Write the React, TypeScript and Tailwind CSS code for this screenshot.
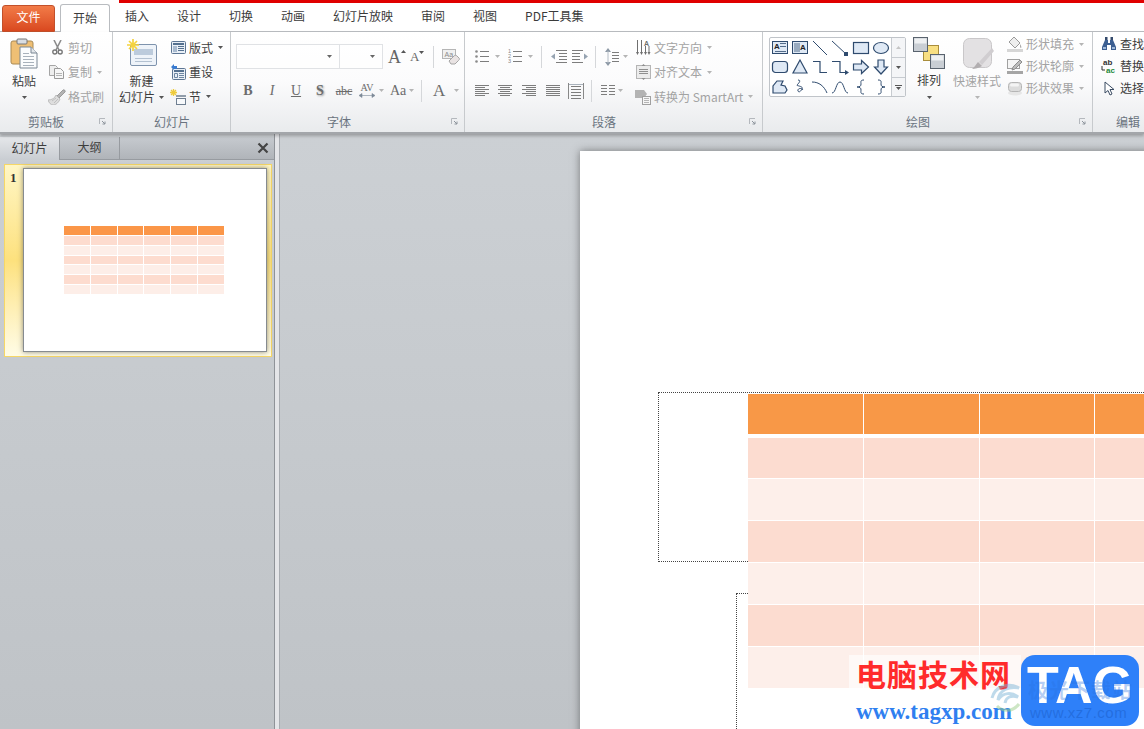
import type { ReactNode } from "react";

const Caret = ({ c = "#7a7a7a" }: { c?: string }) => (
  <svg width="5" height="3" viewBox="0 0 5 3" className="shrink-0">
    <path d="M0 0h5L2.5 3z" fill={c} />
  </svg>
);

const Launcher = () => (
  <svg width="7" height="7" viewBox="0 0 7 7" className="ml-auto mr-[6px]">
    <path d="M.5 6V.5H6" fill="none" stroke="#b4b8bd" />
    <path d="M3 3l3 3M6 3.5V6H3.5" fill="none" stroke="#8d949c" />
  </svg>
);

const Sep = ({ ml, h = 22 }: { ml: string; h?: number }) => (
  <div className={`w-px bg-[#d5d7da] shrink-0 ${ml}`} style={{ height: h }} />
);

// little stacks of lines used by the paragraph buttons
const Lines = ({ rows, w = 14, c = "#7d7d7d" }: { rows: number[][]; w?: number; c?: string }) => (
  <svg width={w} height={rows.length * 2} viewBox={`0 0 ${w} ${rows.length * 2}`} className="shrink-0">
    {rows.map((r, i) => (
      <rect key={i} x={r[0]} y={i * 2} width={r[1] - r[0]} height="1" fill={c} />
    ))}
  </svg>
);

const Group = ({ w, label, labelMl, launcher, children }: { w: string; label: string; labelMl: string; launcher?: boolean; children: ReactNode }) => (
  <div className={`${w} shrink-0 flex flex-col border-r border-[#c7cacd]`}>
    <div className="h-[79px] flex">{children}</div>
    <div className="flex-1 flex items-center">
      <span className={`${labelMl} text-[12px] leading-none text-[#6a7480] whitespace-nowrap`}>{label}</span>
      {launcher && <Launcher />}
    </div>
  </div>
);

const SmallBtn = ({ icon, label, caret, off, h = "h-[24.5px]" }: { icon: ReactNode; label: string; caret?: boolean; off?: boolean; h?: string }) => (
  <div className={`${h} flex items-center whitespace-nowrap`}>
    <div className="w-[16px] h-[16px] mr-[3px] flex items-center justify-center shrink-0">{icon}</div>
    <span className={`text-[12px] leading-none ${off ? "text-[#a3a3a3]" : "text-[#3d3d3d]"}`}>{label}</span>
    {caret && (
      <span className="ml-[5px] flex">
        <Caret c={off ? "#b5b5b5" : "#555"} />
      </span>
    )}
  </div>
);

const PasteIcon = () => (
  <svg width="28" height="31" viewBox="0 0 28 31">
    <rect x="1" y="3" width="22" height="23" rx="2" fill="#efbf74" stroke="#a98a55" />
    <rect x="7" y="1" width="10" height="5" rx="1" fill="#d9dde2" stroke="#777" />
    <path d="M10 9h11l6 6v15H10z" fill="#fbfcfd" stroke="#7b8794" />
    <path d="M21 9v6h6" fill="#e2e6ea" stroke="#7b8794" />
    <path d="M13 15.500h6M13 18.500h11M13 21.500h11M13 24.500h11M13 27.500h11" stroke="#a8b1bb" />
  </svg>
);

const ScissorsIcon = () => (
  <svg width="11" height="15" viewBox="0 0 11 15">
    <path d="M2 0l5 10M9 0L4 10" stroke="#8d8d8d" strokeWidth="1.6" fill="none" />
    <circle cx="2.800" cy="12" r="2" fill="none" stroke="#777" strokeWidth="1.4" />
    <circle cx="8.200" cy="12" r="2" fill="none" stroke="#777" strokeWidth="1.4" />
  </svg>
);

const CopyIcon = () => (
  <svg width="16" height="14" viewBox="0 0 16 14">
    <path d="M.5.500h6l2 2v8h-8z" fill="#eee" stroke="#a5a5a5" />
    <path d="M5.500 3.500h6l3 3v7h-9z" fill="#f7f7f7" stroke="#9a9a9a" />
    <path d="M7 8.500h6M7 10.500h6" stroke="#b5b5b5" />
  </svg>
);

const BrushIcon = () => (
  <svg width="18" height="16" viewBox="0 0 18 16" className="shrink-0">
    <path d="M9 7l6-6c1-1 3 1 2 2l-6 6z" fill="#b3b3b3" stroke="#8c8c8c" strokeWidth=".8" />
    <path d="M0 11c4 0 7-2 8-5l4 4c-1 3-4 6-7 6-2 0-4-2-5-5z" fill="#dedede" stroke="#b2b2b2" strokeWidth=".8" />
    <path d="M4 12l4-3M6 14l4-4" stroke="#b2b2b2" strokeWidth=".7" />
  </svg>
);

const NewSlideIcon = () => (
  <svg width="30" height="28" viewBox="0 0 30 28">
    <rect x="3.500" y="5.500" width="26" height="21" rx="1.500" fill="#eef3f9" stroke="#7e93ad" />
    <rect x="7" y="10" width="19" height="6" fill="#bccbdc" />
    <path d="M8 19.500h17M8 22.500h17" stroke="#b3c1d1" />
    <path d="M6 0v12M0 6h12M2 2l8 8M10 2l-8 8" stroke="#f5d33f" strokeWidth="1.700" />
  </svg>
);

const LayoutIcon = () => (
  <svg width="15" height="13" viewBox="0 0 15 13">
    <rect x=".5" y=".5" width="14" height="12" rx="1" fill="#e9eff6" stroke="#5c7593" />
    <rect x="2" y="2" width="11" height="2" fill="#54708f" />
    <rect x="2" y="5" width="4" height="6" fill="#a9bbd0" />
    <path d="M7 5.500h6M7 7.500h6M7 9.500h6" stroke="#54708f" />
  </svg>
);

const ResetIcon = () => (
  <svg width="16" height="16" viewBox="0 0 16 16">
    <rect x="2.500" y="4.500" width="13" height="11" rx="1" fill="#e9eff6" stroke="#5c7593" />
    <rect x="4" y="6" width="10" height="2" fill="#54708f" />
    <path d="M4.500 9.500h3v4h-3zM9 9.500h5M9 11.500h5M9 13.500h5" stroke="#6d86a2" fill="none" />
    <path d="M1 3l3-3v2h3v3H4v1z" fill="#3a7bd0" />
  </svg>
);

const SectionIcon = () => (
  <svg width="16" height="16" viewBox="0 0 16 16">
    <path d="M3.500 0v7M0 3.500h7M1 1l5 5M6 1L1 6" stroke="#eecb3d" strokeWidth="1.300" />
    <path d="M6 7h10" stroke="#6f7f91" strokeWidth="1.500" />
    <rect x="6.500" y="9.500" width="9" height="6" fill="#f7f9fb" stroke="#6f7f91" />
  </svg>
);

const EraserIcon = () => (
  <svg width="18" height="16" viewBox="0 0 18 16">
    <rect x=".5" y=".5" width="13" height="9" fill="#f0f0f0" stroke="#b5b5b5" />
    <text x="2.500" y="8" fontSize="7" fill="#8a8a8a" fontFamily="Liberation Sans">Aa</text>
    <path d="M7 12l5-5c1-1 2-1 3 0l2 2c1 1 0 2-.5 2.500L13 15H9z" fill="#e9e3e3" stroke="#a5a5a5" />
  </svg>
);

const BulletIcon = ({ nums }: { nums?: boolean }) => (
  <svg width="14" height="15" viewBox="0 0 14 15" className="shrink-0">
    {[2, 7, 12].map((y, i) =>
      nums ? (
        <text key={y} x="0" y={y + 2} fontSize="5.500" fill="#888" fontFamily="Liberation Sans">{i + 1}</text>
      ) : (
        <circle key={y} cx="1.500" cy={y + 0.5} r="1.300" fill="#8a8a8a" />
      )
    )}
    <path d="M5 2.500h9M5 7.500h9M5 12.500h9" stroke="#7d7d7d" />
  </svg>
);

const IndentIcon = ({ flip }: { flip?: boolean }) => (
  <svg width="16" height="14" viewBox="0 0 16 14" className="shrink-0">
    <g transform={flip ? "translate(16,0) scale(-1,1)" : undefined}>
      <path d="M5 .5h11M8 3.500h8M8 6.500h8M8 9.500h8M5 12.500h11" stroke="#7d7d7d" />
      <path d="M0 6.500l4-3v6z" fill="#96a3b1" />
    </g>
  </svg>
);

const LineSpacingIcon = () => (
  <svg width="14" height="18" viewBox="0 0 14 18" className="shrink-0">
    <path d="M3 0l3 4H0zM3 18l3-4H0z" fill="#8d99a6" />
    <path d="M3 3v12" stroke="#b4bcc5" />
    <path d="M7 4.500h7M7 7.500h7M7 10.500h7M7 13.500h7" stroke="#7d7d7d" />
  </svg>
);

const DistIcon = () => (
  <svg width="16" height="16" viewBox="0 0 16 16" className="shrink-0">
    <path d="M.5 0v16M15.500 0v16" stroke="#888" />
    <path d="M3 3.500h10M3 6.500h10M3 9.500h10M3 12.500h10M3 15.500h10" stroke="#7d7d7d" />
    <path d="M1 1.500h14" stroke="#a9b2bc" />
  </svg>
);

const ColumnsIcon = () => (
  <svg width="14" height="11" viewBox="0 0 14 11" className="shrink-0">
    <path d="M0 .5h6M0 3.500h6M0 6.500h6M0 9.500h6M8 .5h6M8 3.500h6M8 6.500h6M8 9.500h6" stroke="#7d7d7d" />
  </svg>
);

const TextDirIcon = () => (
  <svg width="15" height="16" viewBox="0 0 15 16">
    <path d="M1.500 0v13M5.500 0v13M9.500 6v7M13 6v7" stroke="#6f6f6f" />
    <path d="M0 12h3l-1.500 3zM4 12h3l-1.500 3zM8 12h3l-1.500 3zM11.500 12h3L13 15z" fill="#6f6f6f" />
    <text x="8" y="5.500" fontSize="7" fill="#6f6f6f" fontFamily="Liberation Sans" fontWeight="700">A</text>
  </svg>
);

const AlignTextIcon = () => (
  <svg width="15" height="16" viewBox="0 0 15 16">
    <rect x=".5" y="1.500" width="14" height="13" fill="#ececec" stroke="#b5b5b5" />
    <path d="M3 5.500h9M3 7.500h9M3 9.500h9" stroke="#8f8f8f" />
    <path d="M7.500 0l2 2h-4zM7.500 16l2-2h-4z" fill="#8f8f8f" />
  </svg>
);

const SmartArtIcon = () => (
  <svg width="16" height="16" viewBox="0 0 16 16">
    <path d="M0 1h9l3 4-3 4H0z" fill="#b3b3b3" />
    <rect x="7.500" y="7.500" width="8" height="8" fill="#f6f6f6" stroke="#a0a0a0" />
    <path d="M9 9.500h5M9 11.500h5M9 13.500h5" stroke="#b5b5b5" />
  </svg>
);

const S = "#2f4b6e";
const F = "#dfe9f5";
const shapes = [
  <><rect x="2.500" y="3.500" width="15" height="12" fill={F} stroke={S} /><text x="4" y="11" fontSize="8" fontWeight="700" fill="#222" fontFamily="Liberation Sans">A</text><path d="M10 5.500h6M10 8.500h6M5 13.500h11" stroke={S} strokeWidth=".8" /></>,
  <><rect x="2.500" y="3.500" width="15" height="12" fill={F} stroke={S} /><path d="M5 5v9M7 5v9M9 5v9" stroke={S} strokeWidth=".8" /><text x="10" y="12" fontSize="8" fontWeight="700" fill="#222" fontFamily="Liberation Sans">A</text></>,
  <path d="M3 3l14 14" stroke={S} fill="none" />,
  <><path d="M2 3l14 13" stroke={S} fill="none" /><rect x="14" y="14" width="4" height="4" fill={S} /></>,
  <rect x="2.500" y="4.500" width="15" height="11" fill={F} stroke={S} strokeWidth="1.200" />,
  <ellipse cx="10" cy="10" rx="7.500" ry="5.500" fill={F} stroke={S} strokeWidth="1.200" />,
  <rect x="2.500" y="4.500" width="15" height="11" rx="3" fill={F} stroke={S} strokeWidth="1.200" />,
  <path d="M10 3l7 13H3z" fill={F} stroke={S} strokeWidth="1.200" />,
  <path d="M3 4.500h7v11h7" fill="none" stroke={S} strokeWidth="1.200" />,
  <><path d="M2 4.500h8v11h6" fill="none" stroke={S} strokeWidth="1.200" /><path d="M15 13l4 2.500-4 2.500z" fill={S} /></>,
  <path d="M2.500 7h8V3.500l7 6.500-7 6.500V13h-8z" fill={F} stroke={S} strokeWidth="1.200" />,
  <path d="M7 3h6v7h3.500L10 17l-6.500-7H7z" fill={F} stroke={S} strokeWidth="1.200" />,
  <path d="M3 16V9l4-5h6l-2 4 4 1 2 4-2 3z" fill={F} stroke={S} strokeWidth="1.200" />,
  <path d="M8 3c4 0 0 4-1 5-1 1 7 1 5 4-1 2-3 4-4 2-1-2 3-4 5-1" fill="none" stroke={S} />,
  <path d="M2 5c7 0 12 4 15 11" fill="none" stroke={S} />,
  <path d="M2 16c4 0 4-11 8-11s4 11 8 11" fill="none" stroke={S} />,
  <path d="M13 3c-4 0-3 2-3 4s-1 3-4 3c3 0 4 1 4 3s-1 4 3 4" fill="none" stroke={S} />,
  <path d="M7 3c4 0 3 2 3 4s1 3 4 3c-3 0-4 1-4 3s1 4-3 4" fill="none" stroke={S} />,
];

const ArrangeIcon = () => (
  <svg width="32" height="32" viewBox="0 0 32 32">
    <rect x="10.500" y="8.500" width="15" height="15" fill="#f8df82" stroke="#a98d3c" />
    <rect x=".5" y=".5" width="14" height="14" fill="#c9ced4" stroke="#59636e" />
    <rect x="1.500" y="1.500" width="12" height="5" fill="#eef0f2" />
    <rect x="17.500" y="17.500" width="14" height="14" fill="#c9ced4" stroke="#59636e" />
    <rect x="18.500" y="18.500" width="12" height="5" fill="#eef0f2" />
  </svg>
);

const QuickStyleIcon = () => (
  <svg width="32" height="32" viewBox="0 0 32 32">
    <rect x=".5" y=".5" width="28" height="29" rx="6" fill="#e3e1e3" stroke="#c9c7c9" />
    <path d="M29 10L16 24l3 3 12-14z" fill="#d0cdd0" />
    <path d="M15 24l4 4c-3 2-7 3-10 3 3-2 4-5 6-7z" fill="#b2aeb0" />
  </svg>
);

const FillIcon = () => (
  <svg width="16" height="16" viewBox="0 0 16 16">
    <path d="M7 1l6 6-5 5-6-6z" fill="#eee" stroke="#9a9a9a" />
    <path d="M13 8c1 2 2 3 1 4-1 0-1-2-1-4z" fill="#a0a0a0" />
    <rect x="0" y="13" width="16" height="3" fill="#d6d6d6" />
  </svg>
);

const OutlineIcon = () => (
  <svg width="16" height="16" viewBox="0 0 16 16">
    <rect x=".5" y="1.500" width="12" height="9" fill="#f5f5f5" stroke="#a0a0a0" />
    <path d="M6 9l7-7 2 2-7 7-3 1z" fill="#bdbdbd" stroke="#8d8d8d" />
    <rect x="0" y="13" width="16" height="3" fill="#a5a5a5" />
  </svg>
);

const EffectIcon = () => (
  <svg width="16" height="16" viewBox="0 0 16 16">
    <ellipse cx="8" cy="13" rx="7" ry="2.500" fill="#e6e6e6" />
    <rect x="1.500" y="2.500" width="13" height="9" rx="3" fill="#dcdcdc" stroke="#b5b5b5" />
    <rect x="3" y="3.500" width="9" height="3" rx="1.500" fill="#f4f4f4" />
  </svg>
);

const FindIcon = () => (
  <svg width="16" height="14" viewBox="0 0 16 14">
    <rect x="4" y="0" width="2.500" height="4" fill="#33496b" />
    <rect x="9.500" y="0" width="2.500" height="4" fill="#33496b" />
    <path d="M4 3h3v3h2V3h3l3 7v3H10V8H6v5H1v-3z" fill="#3c5f92" />
    <rect x="2" y="10" width="3" height="2" fill="#9db7d8" />
    <rect x="11" y="10" width="3" height="2" fill="#9db7d8" />
  </svg>
);

const ReplaceIcon = () => (
  <svg width="16" height="16" viewBox="0 0 16 16">
    <text x="2" y="7" fontSize="8" fontWeight="700" fill="#333" fontFamily="Liberation Sans">ab</text>
    <text x="5" y="15" fontSize="8" fontWeight="700" fill="#1d8a3a" fontFamily="Liberation Sans">ac</text>
    <path d="M1 8v4h3" fill="none" stroke="#333" />
  </svg>
);

const CursorIcon = () => (
  <svg width="11" height="15" viewBox="0 0 11 15">
    <path d="M1 1v11l3-2.500 2 4.500 2-1-2-4.500h4z" fill="#fff" stroke="#3b4c63" />
  </svg>
);

const columnWidths = ["w-[115px]", "w-[115px]", "w-[114px]", "w-[115px]"];

const Row = ({ c, h = "h-[41px]" }: { c: string; h?: string }) => (
  <div className={`${h} shrink-0 flex gap-px`}>
    {columnWidths.map((w, i) => <div key={i} className={`${w} shrink-0 ${c}`} />)}
  </div>
);

export default function App() {
  const tabs = ["插入", "设计", "切换", "动画", "幻灯片放映", "审阅", "视图", "PDF工具集"];
  const thumbRows = ["bg-[#fb9648] h-[9px]", "bg-[#fddccf] h-[9px]", "bg-[#fdeee8] h-[9px]", "bg-[#fddccf] h-[8px]", "bg-[#fdeee8] h-[9px]", "bg-[#fddccf] h-[9px]", "bg-[#fdeee8] h-[9px]"];
  return (
    <div className="relative w-[1144px] h-[729px] overflow-hidden flex flex-col bg-[#c6cacd] [font-family:'Noto_Sans_CJK_SC','Liberation_Sans',sans-serif]">
      {/* title bar remnant */}
      <div className="absolute left-[119px] right-0 top-0 h-[3px] bg-[#e00000] z-20" />

      {/* tab strip */}
      <div className="h-[32px] shrink-0 bg-white flex items-end border-b border-[#b9bcc0]">
        <div className="ml-[2px] w-[53px] h-[27px] -mb-px pb-[3px] rounded-t-[3px] border border-[#c2502a] bg-gradient-to-b from-[#f27b47] to-[#d9481f] text-white text-[12px] flex items-center justify-center">文件</div>
        <div className="ml-[5px] w-[50px] h-[28px] -mb-px pb-[2px] rounded-t-[3px] border border-b-0 border-[#b9bcc0] bg-white text-[#3b3b3b] text-[12px] flex items-center justify-center z-10">开始</div>
        <div className="ml-[15px] h-[28px] pb-[2px] flex items-center gap-[28px] text-[12px] text-[#3b3b3b] whitespace-nowrap">
          {tabs.map((t) => <span key={t}>{t}</span>)}
        </div>
      </div>

      {/* ribbon */}
      <div className="h-[102px] shrink-0 flex overflow-hidden bg-gradient-to-b from-white via-[#fbfbfc] to-[#e9ebed] border-b-2 border-[#a3a6aa] shadow-[0_2px_3px_rgba(60,60,60,0.35)] z-10">
        <Group w="w-[113px]" label="剪贴板" labelMl="ml-[28px]" launcher>
          <div className="w-[48px] pt-[6px] flex flex-col items-center">
            <PasteIcon />
            <span className="mt-[5px] text-[12px] leading-[14px] text-[#3d3d3d]">粘贴</span>
            <span className="mt-[8px] flex"><Caret c="#555" /></span>
          </div>
          <div className="ml-[1px] pt-[3.5px] flex flex-col">
            <SmallBtn off icon={<ScissorsIcon />} label="剪切" />
            <SmallBtn off caret icon={<CopyIcon />} label="复制" />
            <SmallBtn off icon={<BrushIcon />} label="格式刷" />
          </div>
        </Group>

        <Group w="w-[118px]" label="幻灯片" labelMl="ml-[41px]">
          <div className="w-[57px] pt-[7px] flex flex-col items-center">
            <NewSlideIcon />
            <span className="mt-[7px] text-[12px] leading-[14px] text-[#3d3d3d]">新建</span>
            <span className="mt-[2px] text-[12px] leading-[14px] text-[#3d3d3d] flex items-center whitespace-nowrap">幻灯片<span className="ml-[4px] flex"><Caret c="#555" /></span></span>
          </div>
          <div className="pt-[3.5px] flex flex-col">
            <SmallBtn caret icon={<LayoutIcon />} label="版式" />
            <SmallBtn icon={<ResetIcon />} label="重设" />
            <SmallBtn caret icon={<SectionIcon />} label="节" />
          </div>
        </Group>

        <Group w="w-[234px]" label="字体" labelMl="ml-[96px]" launcher>
          <div className="pl-[5px] pt-[12px] flex flex-col">
            <div className="h-[25px] flex items-center">
              <div className="w-[104px] h-[25px] border border-[#e0e2e5] bg-white/50 flex items-center justify-end pr-[7px]"><Caret c="#666" /></div>
              <div className="-ml-px w-[44px] h-[25px] border border-[#e0e2e5] bg-white/50 flex items-center justify-end pr-[7px]"><Caret c="#666" /></div>
              <span className="ml-[5px] w-[15px] text-[18px] leading-none text-[#666] [font-family:'Liberation_Serif',serif] flex">A<svg width="5" height="3" viewBox="0 0 5 3" className="mt-[2px] shrink-0"><path d="M0 3h5L2.500 0z" fill="#555" /></svg></span>
              <span className="ml-[7px] w-[14px] text-[13px] leading-none text-[#666] [font-family:'Liberation_Serif',serif] flex">A<svg width="5" height="3" viewBox="0 0 5 3" className="mt-[1px] shrink-0"><path d="M0 0h5L2.500 3z" fill="#555" /></svg></span>
              <Sep ml="ml-[9px]" />
              <span className="ml-[8px] flex"><EraserIcon /></span>
            </div>
            <div className="mt-[9px] h-[25px] flex items-center text-[#6c6c6c] [font-family:'Liberation_Serif',serif]">
              <span className="w-[24px] text-center text-[14px] font-bold leading-none">B</span>
              <span className="w-[24px] text-center text-[14px] italic leading-none">I</span>
              <span className="w-[24px] text-center text-[14px] underline leading-none">U</span>
              <span className="w-[24px] text-center text-[14px] font-bold leading-none [text-shadow:1px_1px_2px_#999]">S</span>
              <span className="w-[24px] text-center text-[12px] line-through leading-none">abc</span>
              <span className="w-[22px] flex flex-col items-center leading-none">
                <span className="text-[10px] leading-[10px]">AV</span>
                <svg width="16" height="5" viewBox="0 0 16 5"><path d="M0 2.500l3-2v4zM16 2.500l-3-2v4zM3 2.500h10" fill="#7d8a98" stroke="#7d8a98" strokeWidth=".6" /></svg>
              </span>
              <span className="ml-[1px] flex"><Caret c="#b5b5b5" /></span>
              <span className="ml-[6px] w-[18px] text-[14px] leading-none">Aa</span>
              <span className="ml-[1px] flex"><Caret c="#b5b5b5" /></span>
              <Sep ml="ml-[7px]" />
              <span className="ml-[11px] text-[17px] leading-none">A</span>
              <span className="ml-[9px] flex"><Caret c="#b5b5b5" /></span>
            </div>
          </div>
        </Group>

        <Group w="w-[298px]" label="段落" labelMl="ml-[127px]" launcher>
          <div className="w-[170px] pl-[10px] pt-[12px] flex flex-col">
            <div className="h-[25px] flex items-center">
              <BulletIcon />
              <span className="ml-[6px] flex"><Caret c="#b5b5b5" /></span>
              <span className="ml-[8px] flex"><BulletIcon nums /></span>
              <span className="ml-[6px] flex"><Caret c="#b5b5b5" /></span>
              <Sep ml="ml-[8px]" />
              <span className="ml-[9px] flex"><IndentIcon /></span>
              <span className="ml-[5px] flex"><IndentIcon flip /></span>
              <Sep ml="ml-[7px]" />
              <span className="ml-[9px] flex"><LineSpacingIcon /></span>
              <span className="ml-[4px] flex"><Caret c="#b5b5b5" /></span>
            </div>
            <div className="mt-[9px] h-[25px] flex items-center">
              <Lines rows={[[0, 14], [0, 10], [0, 14], [0, 10], [0, 14], [0, 10]]} />
              <span className="ml-[9px] flex"><Lines rows={[[0, 14], [2, 12], [0, 14], [2, 12], [0, 14], [2, 12]]} /></span>
              <span className="ml-[10px] flex"><Lines rows={[[0, 14], [4, 14], [0, 14], [4, 14], [0, 14], [4, 14]]} /></span>
              <span className="ml-[10px] flex"><Lines rows={[[0, 14], [0, 14], [0, 14], [0, 14], [0, 14], [0, 14]]} /></span>
              <span className="ml-[8px] flex"><DistIcon /></span>
              <Sep ml="ml-[7px]" />
              <span className="ml-[9px] flex"><ColumnsIcon /></span>
              <span className="ml-[3px] flex"><Caret c="#b5b5b5" /></span>
            </div>
          </div>
          <div className="pt-[3.5px] flex flex-col">
            <SmallBtn off caret icon={<TextDirIcon />} label="文字方向" />
            <SmallBtn off caret icon={<AlignTextIcon />} label="对齐文本" />
            <SmallBtn off caret icon={<SmartArtIcon />} label="转换为 SmartArt" />
          </div>
        </Group>

        <Group w="w-[330px]" label="绘图" labelMl="ml-[143px]" launcher>
          <div className="ml-[6px] mt-[5px] w-[137px] h-[60px] flex border border-[#c0c4c9] rounded-[2px] bg-white">
            <div className="w-[121px] grid grid-cols-6 grid-rows-3 shrink-0">
              {shapes.map((s, i) => (
                <svg key={i} width="20" height="20" viewBox="0 0 20 20">{s}</svg>
              ))}
            </div>
            <div className="flex-1 flex flex-col border-l border-[#c7cbd0] bg-[#f4f5f7]">
              <div className="h-[20px] flex items-center justify-center border-b border-[#c7cbd0]"><svg width="5" height="3" viewBox="0 0 5 3"><path d="M0 3h5L2.500 0z" fill="#c5c5c5" /></svg></div>
              <div className="h-[20px] flex items-center justify-center border-b border-[#c7cbd0]"><Caret c="#555" /></div>
              <div className="flex-1 flex flex-col items-center justify-center gap-[1px]"><div className="w-[7px] h-px bg-[#555]" /><Caret c="#555" /></div>
            </div>
          </div>
          <div className="w-[36px] ml-[5px] pt-[5px] flex flex-col items-center">
            <ArrangeIcon />
            <span className="mt-[4px] text-[12px] leading-[14px] text-[#3d3d3d] whitespace-nowrap">排列</span>
            <span className="mt-[9px] flex"><Caret c="#555" /></span>
          </div>
          <div className="w-[48px] ml-[6px] pt-[6px] flex flex-col items-center">
            <span className="ml-[4px] flex"><QuickStyleIcon /></span>
            <span className="mt-[4px] text-[12px] leading-[14px] text-[#a3a3a3] whitespace-nowrap">快速样式</span>
            <span className="mt-[8px] flex"><Caret c="#b5b5b5" /></span>
          </div>
          <div className="ml-[6px] pt-[1px] flex flex-col">
            <SmallBtn off caret h="h-[22px]" icon={<FillIcon />} label="形状填充" />
            <SmallBtn off caret h="h-[22px]" icon={<OutlineIcon />} label="形状轮廓" />
            <SmallBtn off caret h="h-[22px]" icon={<EffectIcon />} label="形状效果" />
          </div>
        </Group>

        <Group w="w-[60px]" label="编辑" labelMl="ml-[23px]">
          <div className="ml-[8px] pt-[1px] flex flex-col">
            <SmallBtn h="h-[22px]" icon={<FindIcon />} label="查找" />
            <SmallBtn h="h-[22px]" icon={<ReplaceIcon />} label="替换" />
            <SmallBtn h="h-[22px]" icon={<CursorIcon />} label="选择" />
          </div>
        </Group>
      </div>

      {/* workspace */}
      <div className="flex-1 flex min-h-0 bg-gradient-to-b from-[#ccd0d4] to-[#bfc3c7]">
        <aside className="w-[275px] shrink-0 pt-[3px] flex flex-col border-r border-[#8f9398]">
          <div className="h-[23px] shrink-0 flex items-stretch border-b border-[#979ba0] bg-gradient-to-b from-[#c6cacf] to-[#b0b4b9]">
            <div className="w-[60px] h-[23px] pb-[2px] border-r border-[#979ba0] bg-gradient-to-b from-[#e5e7ea] to-[#c9cdd2] text-[12px] text-[#3d3d3d] flex items-center justify-center">幻灯片</div>
            <div className="w-[60px] pb-[2px] border-r border-[#979ba0] text-[12px] text-[#3d3d3d] flex items-center justify-center">大纲</div>
            <svg className="ml-auto mr-[5px] self-center" width="12" height="12" viewBox="0 0 12 12"><path d="M1.500 1.500l9 9M10.500 1.500l-9 9" stroke="#444" strokeWidth="2.200" /></svg>
          </div>
          <div className="ml-[4px] mt-[4px] w-[268px] h-[193px] pt-[3px] flex border border-[#f6d766] bg-gradient-to-b from-[#fff6c4] via-[#fde17d] via-50% to-[#fffce6]">
            <div className="w-[18px] pl-[5px] pt-[3px] text-[13px] font-bold leading-[14px] text-[#333] [font-family:'Liberation_Serif',serif]">1</div>
            <div className="w-[244px] h-[184px] bg-white border border-[#868b90] shadow-[0_0_5px_rgba(70,70,70,0.6)] pl-[40px] pt-[57px]">
              <div className="w-[160px] flex flex-col gap-px">
                {thumbRows.map((c, i) => (
                  <div key={i} className="flex gap-px">
                    {[0, 1, 2, 3, 4, 5].map((j) => <div key={j} className={`flex-1 ${c}`} />)}
                  </div>
                ))}
              </div>
            </div>
          </div>
        </aside>
        <div className="w-[5px] shrink-0 bg-[#e4e5e8] border-r border-[#a9adb2]" />

        <main className="flex-1 min-w-0 overflow-hidden pl-[300px] pt-[17px]">
          <div className="relative w-[900px] h-[800px] bg-white shadow-[0_0_8px_rgba(50,50,50,0.55)]">
            <div className="absolute left-[78px] top-[241px] w-[800px] h-[170px] border border-dotted border-[#444]" />
            <div className="absolute left-[156px] top-[442px] w-[700px] h-[400px] border border-dotted border-[#444]" />
            <div className="absolute left-[168px] top-[243px] w-[480px] flex flex-col bg-white">
              <div className="h-[40px] flex gap-px">{columnWidths.map((w, i) => <div key={i} className={`${w} shrink-0 bg-[#f89847]`} />)}</div>
              <div className="h-[4px]" />
              <div className="flex flex-col gap-px">
                <Row c="bg-[#fcdcd0]" h="h-[40px]" />
                <Row c="bg-[#fdefea]" />
                <Row c="bg-[#fcdcd0]" />
                <Row c="bg-[#fdefea]" />
                <Row c="bg-[#fcdcd0]" />
                <Row c="bg-[#fdefea]" />
              </div>
            </div>
          </div>
        </main>
      </div>

      {/* site watermark sits over the slide */}
      <div className="absolute left-[849px] top-[655px] w-[172px] h-[74px] bg-white/60 z-20">
        <div className="pl-[7px] text-[30px] font-bold leading-[36px] tracking-[1px] text-[#ff2b2b] whitespace-nowrap">电脑技术网</div>
        <div className="pl-[7px] mt-[10px] text-[23px] font-bold leading-[22px] text-[#2f7ff0] whitespace-nowrap [font-family:'Liberation_Serif',serif]">www.tagxp.com</div>
      </div>
      <svg className="absolute left-[988px] top-[680px] z-20 opacity-50" width="36" height="40" viewBox="0 0 34 40">
        <path d="M3 18C6 6 20 2 30 8 20 6 10 10 9 20c5-8 14-8 20-3-7-2-12 0-13 6" fill="none" stroke="#7fb6d8" strokeWidth="3" />
        <path d="M8 26c6 6 16 6 22-2" fill="none" stroke="#9ccf8a" strokeWidth="3" />
      </svg>
      <div className="absolute left-[1021px] top-[655px] w-[118px] h-[71px] rounded-[14px] bg-[#2e80f9] z-20 overflow-hidden flex items-center justify-center">
        <span className="text-[52px] font-bold leading-none text-white [font-family:'Liberation_Sans',sans-serif] -mt-[11px]">TAG</span>
        <div className="absolute left-[7px] top-[25px] text-[20px] font-bold leading-none tracking-[1px] text-[#2a72e0]/35 whitespace-nowrap">极光下载站</div>
        <div className="absolute left-[9px] bottom-[6px] text-[15px] leading-none tracking-[0.5px] text-[#1f66d4]/70 whitespace-nowrap [font-family:'Liberation_Sans',sans-serif]">www.xz7.com</div>
      </div>
    </div>
  );
}
